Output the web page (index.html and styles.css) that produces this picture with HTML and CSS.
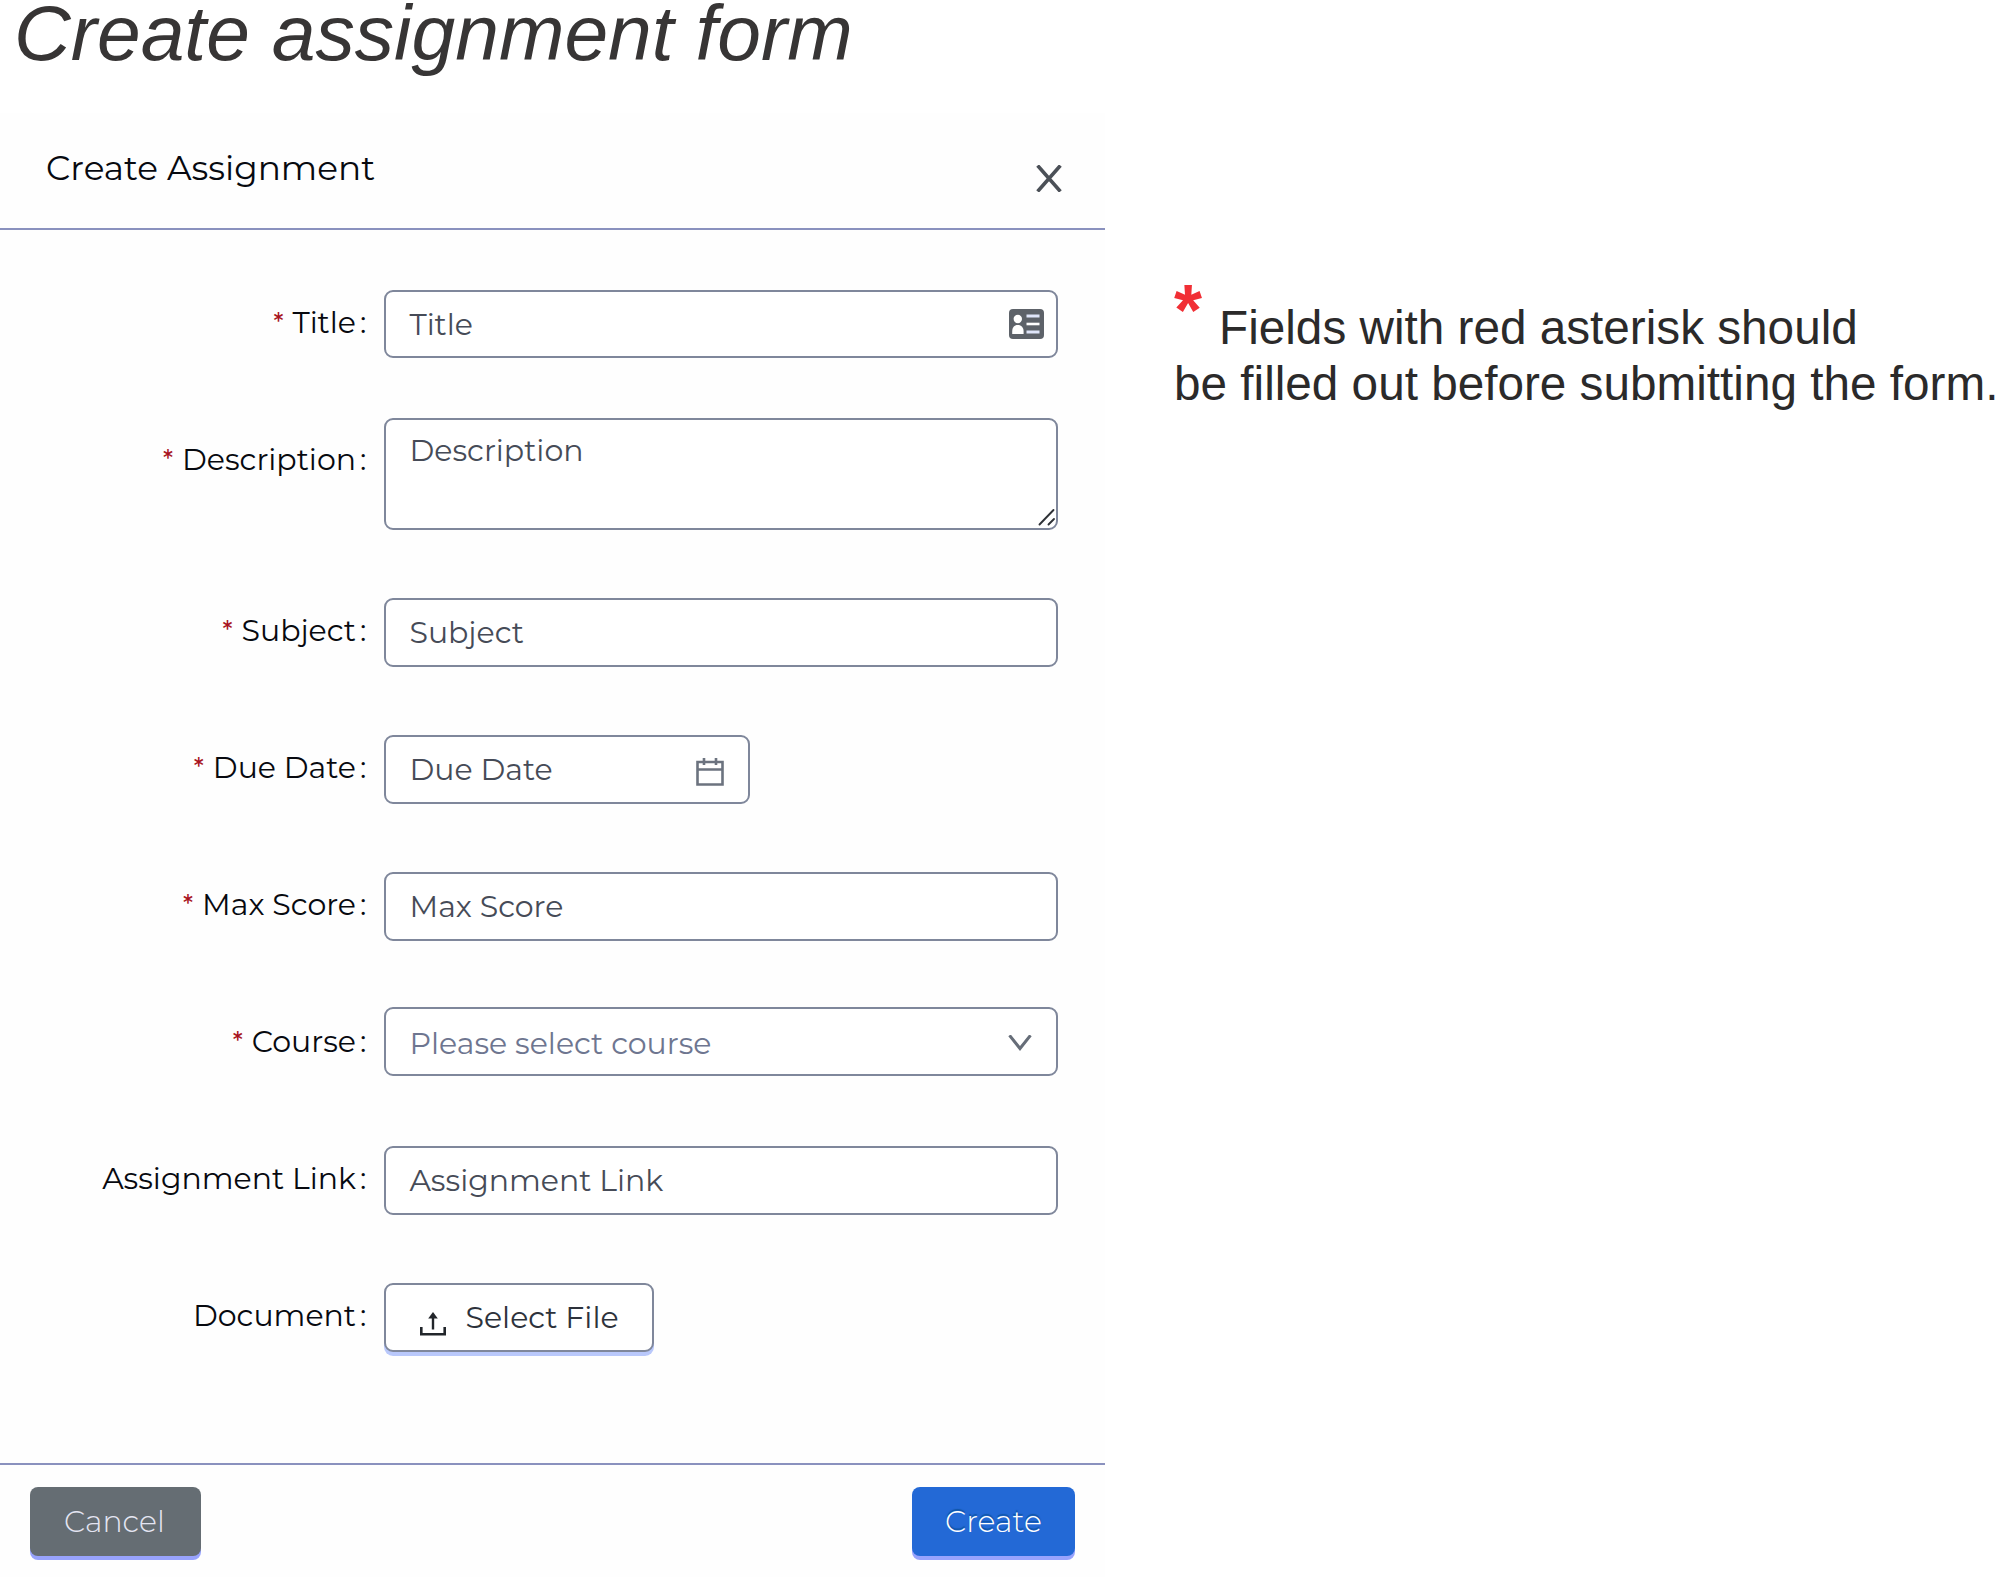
FILE: index.html
```
<!DOCTYPE html>
<html lang="en">
<head>
<meta charset="utf-8">
<title>Create assignment form</title>
<link rel="stylesheet" href="styles.css">
</head>
<body>
<h1 class="page-title">Create assignment form</h1>
<main class="layout">
  <section class="modal">
    <header class="modal-header">
      <h2 class="modal-title">Create Assignment</h2>
      <svg class="close" width="26" height="27" viewBox="0 0 26 27" fill="none" stroke="#4b5057" stroke-width="3.6"><path d="M1.6 .5 24.4 26.500M24.400 .5 1.600 26.500"/></svg>
    </header>
    <form class="form">
      <div class="row row-title">
        <div class="label"><span class="req">*</span>Title<span class="colon">:</span></div>
        <div class="field">Title
          <svg class="card-icon" width="35" height="30" viewBox="0 0 35 30"><rect width="35" height="30" rx="4" fill="#5d6269"/><g fill="#fff"><circle cx="8.800" cy="10" r="4.200"/><path d="M3.200 25v-2.500c0-4 2-6.500 5.600-6.500s5.800 2.500 5.800 6.500V25z"/><path d="M17.500 13.700h13v2.600h-13z"/></g><g fill="#dfe5fa"><path d="M17.500 5.500h13v3h-13zM17.500 21.500h13v3h-13z"/></g></svg>
        </div>
      </div>
      <div class="row row-description">
        <div class="label"><span class="req">*</span>Description<span class="colon">:</span></div>
        <div class="field area">Description
          <svg class="grip" width="18" height="18" viewBox="0 0 18 18" stroke="#2e3136" stroke-width="1.900" stroke-linecap="round"><path d="M1.500 16.500l14-14.500M10.500 16.500l5.500-5.500"/></svg>
        </div>
      </div>
      <div class="row row-subject">
        <div class="label"><span class="req">*</span>Subject<span class="colon">:</span></div>
        <div class="field">Subject</div>
      </div>
      <div class="row row-due">
        <div class="label"><span class="req">*</span>Due Date<span class="colon">:</span></div>
        <div class="field date">Due Date
          <svg class="calendar" width="28" height="28" viewBox="0 0 28 28" fill="none" stroke="#6c737f" stroke-width="2.600"><path d="M1.500 4h25v22.500h-25zM1.500 11.500h25M8 0v7M20 0v7"/></svg>
        </div>
      </div>
      <div class="row row-score">
        <div class="label"><span class="req">*</span>Max Score<span class="colon">:</span></div>
        <div class="field">Max Score</div>
      </div>
      <div class="row row-course">
        <div class="label"><span class="req">*</span>Course<span class="colon">:</span></div>
        <div class="field select">Please select course
          <svg class="chevron" width="24" height="16" viewBox="0 0 24 16" fill="none" stroke="#666d78" stroke-width="3"><path d="M1.500 .3 12 13.500 22.500 .3"/></svg>
        </div>
      </div>
      <div class="row row-link">
        <div class="label">Assignment Link<span class="colon">:</span></div>
        <div class="field">Assignment Link</div>
      </div>
      <div class="row row-document">
        <div class="label">Document<span class="colon">:</span></div>
        <div class="field upload">
          <svg class="upload-icon" width="26" height="24" viewBox="0 0 26 24" fill="none" stroke="#22262b"><path stroke-width="2.600" d="M1.300 15v7.300h23.400V15"/><path stroke-width="2.400" d="M13 17.500V5"/><path fill="#22262b" stroke="none" d="M13 0l4.800 6.500H8.200z"/></svg>
          Select File
        </div>
      </div>
    </form>
    <footer class="modal-footer">
      <div class="button cancel">Cancel</div>
      <div class="button create">Create</div>
    </footer>
  </section>
  <p class="note"><span class="note-star">*</span>Fields with red asterisk should<br>be filled out before submitting the form.</p>
</main>
</body>
</html>
```
FILE: styles.css
```
* { box-sizing: border-box; }
body {
  margin: 0;
  height: 1577px;
  overflow: hidden;
  background: #fff;
  color: #07090f;
  font-family: Montserrat, Inter, sans-serif;
  font-size: 30px;
}
.page-title {
  margin: 0;
  height: 113px;
  padding-left: 14px;
  font: italic 400 78.6px/66px "Liberation Sans", Arial, sans-serif;
  color: #373535;
  white-space: nowrap;
}
.layout { display: flex; align-items: flex-start; }

.modal { width: 1105px; height: 1464px; flex: none; background: #fefefe; }
.modal-header {
  display: flex;
  justify-content: space-between;
  height: 117px;
  padding: 36px 43px 0 46px;
  border-bottom: 2px solid #8a91be;
}
.modal-title {
  margin: 0;
  font-size: 34.3px;
  font-weight: 400;
  line-height: 39px;
}
.close { margin-top: 16px; }

.form { height: 1233px; padding-top: 60px; }
.row { display: grid; grid-template-columns: 368px 674px; column-gap: 15.500px; height: 69px; margin-bottom: 68px; }
.row-title { height: 68px; margin-bottom: 60px; }
.row-description { height: 112px; }
.row-score { margin-bottom: 66px; }
.row-course { margin-bottom: 70px; }
.label { display: flex; justify-content: flex-end; line-height: 65px; white-space: nowrap; }
.row-description .label { line-height: 83px; }
.row-course .label { line-height: 69px; }
.req { width: 19px; color: #a8141f; font-size: 25px; font-weight: 500; }
.colon { width: 12px; padding-left: 4px; }

.field {
  position: relative;
  display: flex;
  align-items: center;
  justify-content: space-between;
  padding: 0 12px 0 24px;
  border: 2px solid #7f879b;
  border-radius: 9px;
  background: #fff;
  color: #464b57;
  white-space: nowrap;
}
.area { align-items: flex-start; line-height: 61px; }
.grip { position: absolute; right: 0; bottom: 2px; }
.date { width: 366px; padding: 0 24px; }
.calendar { margin-top: 4px; }
.select { padding: 3px 24px 0; color: #6e7690; }
.upload { justify-content: flex-start; width: 270px; padding-left: 34px; color: #2d323b; box-shadow: 0 4px 0 #b9c8fb; }
.upload-icon { margin: 13px 20px 0 0; flex: none; }

.modal-footer {
  display: flex;
  justify-content: space-between;
  height: 114px;
  padding: 22px 30px 0;
  border-top: 2px solid #8a91be;
}
.button {
  height: 69px;
  border-radius: 8px;
  color: #fff;
  font-weight: 300;
  line-height: 69px;
  box-shadow: 0 4px 0 #98a3fd;
}
.cancel { width: 171px; padding-left: 34px; background: #656d73; color: #e4e5f2; }
.create { width: 163px; padding-left: 33px; background: #2369d6; text-shadow: 0 -2px 1px rgba(0, 70, 130, .6); }

.note {
  margin: 187px 0 0 69px;
  font: 47.7px/56px "Liberation Sans", Arial, sans-serif;
  color: #2b2a2a;
  white-space: nowrap;
}
.note-star { margin-right: 17px; color: #f12f35; font-size: 72px; font-weight: 700; line-height: 0; vertical-align: 9px; }
```
